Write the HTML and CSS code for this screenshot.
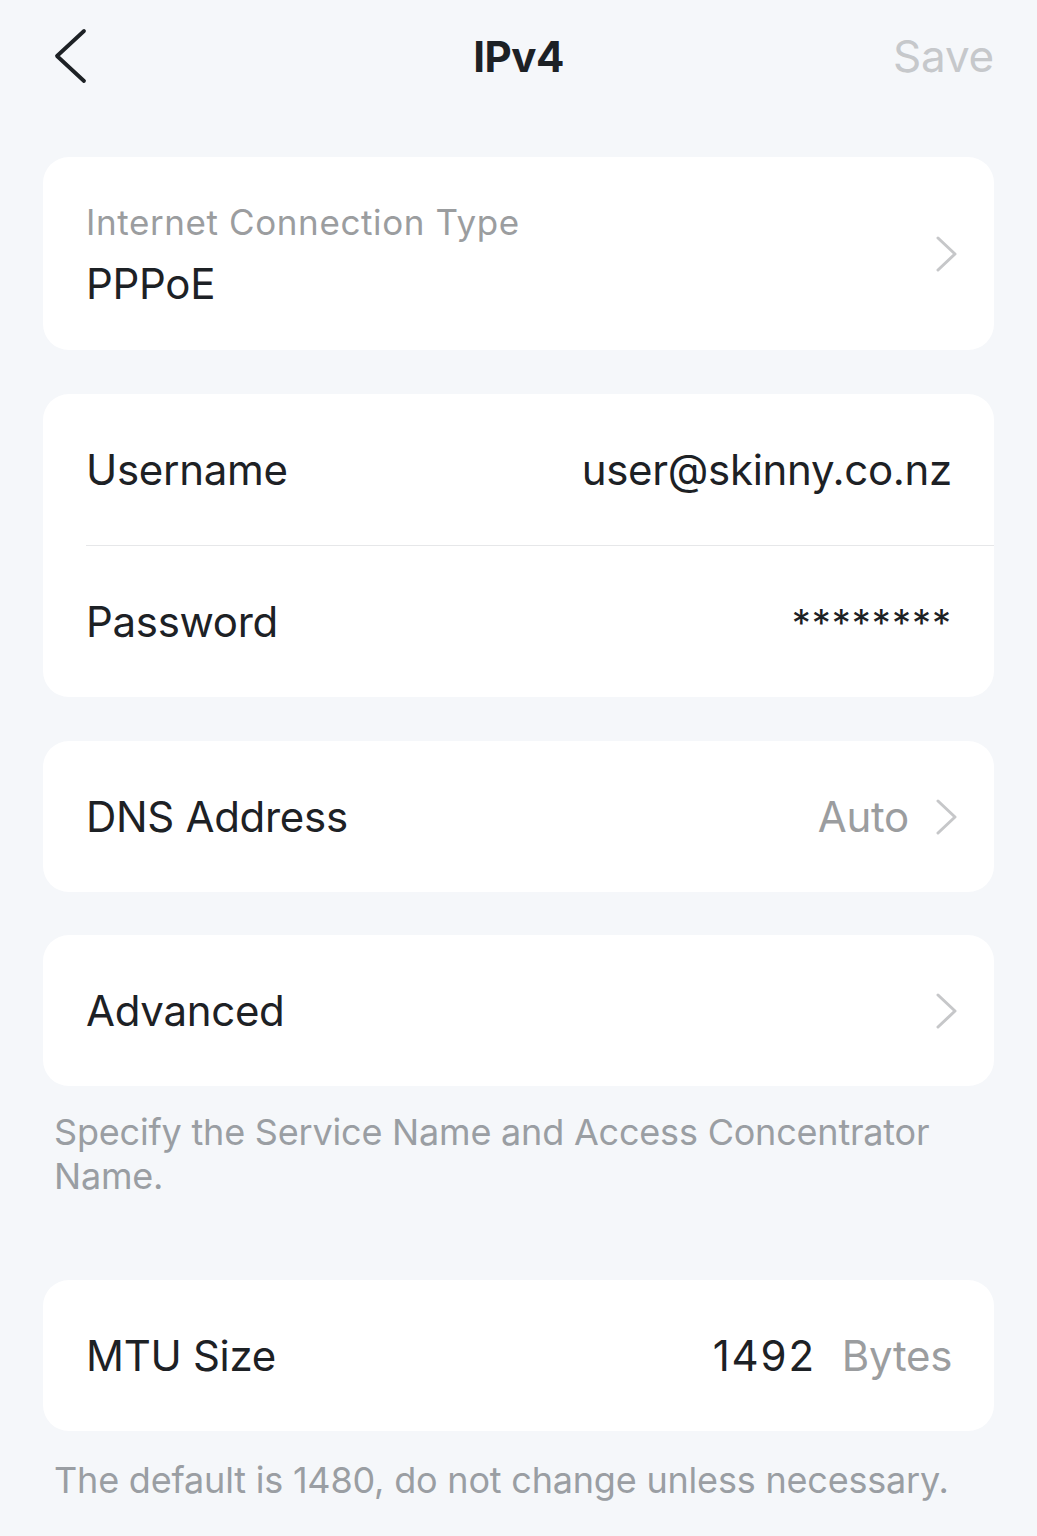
FILE: index.html
```html
<!DOCTYPE html>
<html lang="en">
<head>
<meta charset="utf-8">
<title>IPv4</title>
<link rel="stylesheet" href="styles.css">
</head>
<body>
<div class="page">
  <header class="nav">
    <button class="back" aria-label="Back">
      <svg width="44" height="60" viewBox="0 0 44 60"><path d="M41 5 L14 30 L41 55" fill="none" stroke="#1d2125" stroke-width="3.8" stroke-linecap="round" stroke-linejoin="round"/></svg>
    </button>
    <h1 class="title">IPv4</h1>
    <span class="save">Save</span>
  </header>

  <section class="card type-card">
    <div class="type-text">
      <div class="label">Internet Connection Type</div>
      <div class="value">PPPoE</div>
    </div>
    <svg class="chev" width="24" height="36" viewBox="0 0 24 36"><path d="M3 2 L20 18 L3 34" fill="none" stroke="#c6c7c9" stroke-width="3" stroke-linecap="round" stroke-linejoin="round"/></svg>
  </section>

  <section class="card">
    <div class="row">
      <span class="name">Username</span>
      <span class="val">user@skinny.co.nz</span>
    </div>
    <div class="divider"></div>
    <div class="row">
      <span class="name">Password</span>
      <span class="val stars">********</span>
    </div>
  </section>

  <section class="card">
    <div class="row row-link">
      <span class="name">DNS Address</span>
      <span class="right"><span class="val muted">Auto</span><svg class="chev" width="24" height="36" viewBox="0 0 24 36"><path d="M3 2 L20 18 L3 34" fill="none" stroke="#c6c7c9" stroke-width="3" stroke-linecap="round" stroke-linejoin="round"/></svg></span>
    </div>
  </section>

  <section class="card with-note tight">
    <div class="row row-link">
      <span class="name">Advanced</span>
      <span class="right"><svg class="chev" width="24" height="36" viewBox="0 0 24 36"><path d="M3 2 L20 18 L3 34" fill="none" stroke="#c6c7c9" stroke-width="3" stroke-linecap="round" stroke-linejoin="round"/></svg></span>
    </div>
  </section>
  <p class="note note-1">Specify the Service Name and Access Concentrator Name.</p>

  <section class="card with-note">
    <div class="row">
      <span class="name">MTU Size</span>
      <span class="right"><span class="val num">1492</span><span class="val muted unit">Bytes</span></span>
    </div>
  </section>
  <p class="note note-2">The default is 1480, do not change unless necessary.</p>
</div>
</body>
</html>
```
FILE: styles.css
```css
* { box-sizing: border-box; }
html, body {
  margin: 0;
  padding: 0;
  background: #f5f7fa;
}
body {
  font-family: Inter, "Noto Sans", "Liberation Sans", sans-serif;
  color: #1d2125;
}
.page {
  width: 1037px;
  min-height: 1536px;
  padding: 0 43px;
  display: flex;
  flex-direction: column;
  gap: 44px;
}
.nav {
  height: 113px;
  display: flex;
  align-items: center;
  justify-content: space-between;
  position: relative;
}
.back {
  background: none;
  border: 0;
  padding: 0;
  width: 44px;
  height: 60px;
  margin-top: -2px;
}
.back svg { display: block; }
.title {
  position: absolute;
  left: 0;
  right: 0;
  top: 0;
  height: 113px;
  margin: 0;
  display: flex;
  align-items: center;
  justify-content: center;
  font-size: 42px;
  font-weight: 700;
  letter-spacing: -0.5px;
  pointer-events: none;
}
.save {
  font-size: 44px;
  color: #c6c8cb;
  letter-spacing: -0.2px;
  margin-top: -2px;
}
.card {
  background: #ffffff;
  border-radius: 26px;
}
.type-card {
  height: 193px;
  display: flex;
  align-items: center;
  justify-content: space-between;
  padding: 0 35px 0 43px;
}
.type-text {
  display: flex;
  flex-direction: column;
  gap: 14px;
  margin-top: 2px;
}
.label {
  font-size: 35px;
  line-height: 44px;
  color: #9b9d9f;
  letter-spacing: 0.6px;
}
.value {
  font-size: 42px;
  line-height: 52px;
  letter-spacing: -0.3px;
}
.chev { display: block; flex: none; }
.row {
  height: 151px;
  display: flex;
  align-items: center;
  justify-content: space-between;
  padding: 0 42px 0 43px;
}
.row-link { padding-right: 35px; }
.name {
  font-size: 42px;
  letter-spacing: -0.3px;
}
.val {
  font-size: 42px;
  letter-spacing: -0.3px;
}
.stars {
  font-size: 38px;
  letter-spacing: 1px;
  margin-top: 2px;
}
.num { letter-spacing: 1.8px; }
.muted { color: #9b9d9f; }
.right {
  display: flex;
  align-items: center;
  gap: 26px;
}
.divider {
  height: 1px;
  background: #e6e7e9;
  margin-left: 43px;
}
.tight { margin-top: -1px; }
.with-note { margin-bottom: -20px; }
.note {
  margin: 0;
  padding: 0 10px 0 11px;
  font-size: 36px;
  line-height: 44px;
  color: #9a9ea3;
  letter-spacing: -0.2px;
}
.note-1 { margin-bottom: 38px; }
.note-2 { margin-top: 3px; }
```
